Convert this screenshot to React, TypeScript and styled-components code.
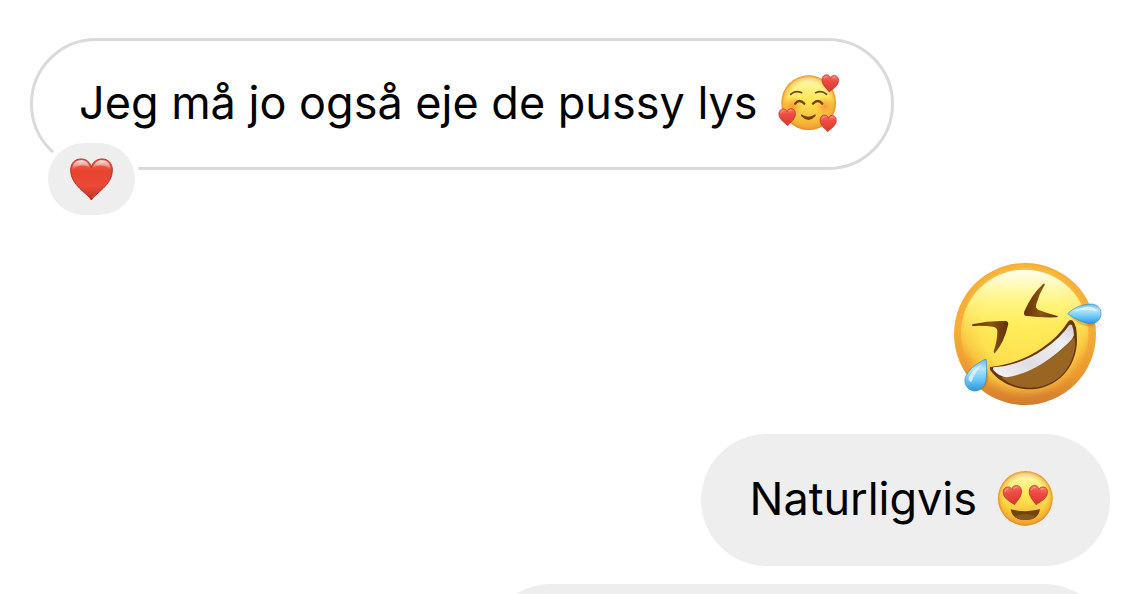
import React from "react";
import styled, { createGlobalStyle, css } from "styled-components";

const GlobalStyle = createGlobalStyle`
  * { box-sizing: border-box; }
  body { margin: 0; background: #ffffff; }
`;

const Thread = styled.main`
  height: 100vh;
  overflow: hidden;
  display: flex;
  flex-direction: column;
  padding: 38px 36px 0 30px;
  color: #000000;
  font-family: Inter, "Liberation Sans", sans-serif;
  font-size: 45px;
  line-height: 60px;
`;

const Message = styled.article<{ $own?: boolean; $after?: number }>`
  position: relative;
  flex: none;
  display: flex;
  justify-content: ${(p) => (p.$own ? "flex-end" : "flex-start")};
  margin-bottom: ${(p) => p.$after ?? 0}px;
`;

const Bubble = styled.div<{ $own?: boolean; $minWidth?: number }>`
  display: flex;
  align-items: center;
  gap: 20px;
  min-height: 132px;
  min-width: ${(p) => p.$minWidth ?? 0}px;
  border-radius: 66px;
  ${(p) =>
    p.$own
      ? css`
          padding: 0 57px 3px 49px;
          background: #eeeeee;
        `
      : css`
          padding: 0 51px 3px 46px;
          border: 3px solid #dadada;
          background: #ffffff;
        `}
`;

const Text = styled.p`
  margin: 0;
`;

const Reaction = styled.button`
  position: absolute;
  left: 18px;
  top: 105px;
  display: flex;
  align-items: center;
  justify-content: center;
  width: 87px;
  height: 72px;
  padding: 0;
  border: 0;
  border-radius: 36px;
  background: #eeeeee;
  box-shadow: 0 0 0 5px #ffffff;
`;

const Sticker = styled.div`
  display: flex;
  padding-right: 6px;
`;

const Emoji = styled.svg`
  flex: none;
  display: block;
`;

const FaceFill = ({ id }: { id: string }) => (
  <>
    <linearGradient id={`${id}-base`} x1="0" y1="0" x2="0" y2="1">
      <stop offset="0" stopColor="#fffbd5" />
      <stop offset="0.18" stopColor="#fff491" />
      <stop offset="0.48" stopColor="#ffe650" />
      <stop offset="0.78" stopColor="#f9c13c" />
      <stop offset="1" stopColor="#eda235" />
    </linearGradient>
    <radialGradient id={`${id}-rim`} cx="0.5" cy="0.5" r="0.5">
      <stop offset="0.74" stopColor="#f5a52c" stopOpacity="0" />
      <stop offset="0.9" stopColor="#f3a22c" stopOpacity="0.45" />
      <stop offset="1" stopColor="#df8924" stopOpacity="0.95" />
    </radialGradient>
    <linearGradient id={`${id}-heart`} x1="0" y1="0" x2="0" y2="1">
      <stop offset="0" stopColor="#f47a6c" />
      <stop offset="0.35" stopColor="#ee4b41" />
      <stop offset="1" stopColor="#d9372f" />
    </linearGradient>
  </>
);

const heartPath =
  "M0 26 C-6 18-26 7-26-11 C-26-22-18-27-12-27 C-5-27-1-22 0-17 C1-22 5-27 12-27 C19-27 26-22 26-11 C26 7 6 18 0 26Z";

const SmallHeart = ({ x, y, r = 0, s = 1, fill }: { x: number; y: number; r?: number; s?: number; fill: string }) => (
  <g transform={`translate(${x} ${y}) rotate(${r}) scale(${s})`}>
    <path d={heartPath} fill={fill} stroke="#bd302a" strokeWidth="2" />
    <path d="M-20-14Q-18-22-11-22M6-19Q9-23 14-22" fill="none" stroke="#ffb0a2" strokeWidth="3" strokeLinecap="round" opacity="0.65" />
  </g>
);

const LovedFace = () => (
  <Emoji width="62" height="60" viewBox="52 38 186 180" role="img" aria-label="Smilende ansigt med hjerter">
    <defs>
      <FaceFill id="loved" />
      <radialGradient id="loved-blush">
        <stop offset="0" stopColor="#f57a2b" stopOpacity="0.65" />
        <stop offset="1" stopColor="#f57a2b" stopOpacity="0" />
      </radialGradient>
    </defs>
    <circle cx="144" cy="127" r="82" fill="url(#loved-base)" />
    <circle cx="144" cy="127" r="82" fill="url(#loved-rim)" />
    <circle cx="94" cy="138" r="31" fill="url(#loved-blush)" />
    <circle cx="194" cy="138" r="31" fill="url(#loved-blush)" />
    <g fill="none" stroke="#71440f" strokeLinecap="round">
      <path d="M90 102Q104 89 123 97" strokeWidth="5" />
      <path d="M165 97Q184 89 198 102" strokeWidth="5" />
      <path d="M103 130Q116 114 131 130" strokeWidth="7" />
      <path d="M157 130Q172 114 185 130" strokeWidth="7" />
    </g>
    <path d="M122 162Q143 176 164 162Q167 164 164 168Q144 190 122 168Q119 164 122 162Z" fill="#71440f" />
    <SmallHeart x={208} y={70} r={5} s={0.96} fill="url(#loved-heart)" />
    <SmallHeart x={80} y={171} r={-3} s={0.96} fill="url(#loved-heart)" />
    <SmallHeart x={202} y={190} r={3} s={0.94} fill="url(#loved-heart)" />
  </Emoji>
);

const HeartEyes = () => (
  <Emoji width="56" height="57" viewBox="51 45 168 171" role="img" aria-label="Smilende ansigt med hjerteøjne">
    <defs>
      <FaceFill id="eyes" />
      <clipPath id="eyes-mouth">
        <path d="M92 163Q136 174 180 163Q175 195 136 195Q97 195 92 163Z" />
      </clipPath>
    </defs>
    <circle cx="136" cy="130" r="82" fill="url(#eyes-base)" />
    <circle cx="136" cy="130" r="82" fill="url(#eyes-rim)" />
    <SmallHeart x={99} y={122} r={-10} s={1.06} fill="url(#eyes-heart)" />
    <SmallHeart x={173} y={122} r={10} s={1.06} fill="url(#eyes-heart)" />
    <path d="M92 163Q136 174 180 163Q175 195 136 195Q97 195 92 163Z" fill="#70450d" />
    <ellipse cx="136" cy="193" rx="34" ry="16" fill="#86591b" clipPath="url(#eyes-mouth)" />
  </Emoji>
);

const RedHeart = () => (
  <Emoji width="43" height="43" viewBox="150 142 129 129" aria-hidden="true">
    <defs>
      <linearGradient id="red-fill" x1="0" y1="0" x2="0" y2="1">
        <stop offset="0" stopColor="#ef6758" />
        <stop offset="0.3" stopColor="#e7432f" />
        <stop offset="0.65" stopColor="#eb4a37" />
        <stop offset="1" stopColor="#c52f20" />
      </linearGradient>
      <linearGradient id="red-shine" x1="0" y1="0" x2="0" y2="1">
        <stop offset="0" stopColor="#ffffff" stopOpacity="0.85" />
        <stop offset="1" stopColor="#ffffff" stopOpacity="0" />
      </linearGradient>
    </defs>
    <path
      d="M214 268C204 249 152 224 152 179C152 157 165 145 183 145C199 145 210 154 214 170C218 154 230 145 246 145C264 145 277 157 277 179C277 224 224 249 214 268Z"
      fill="url(#red-fill)"
      stroke="#b52c1e"
      strokeWidth="3"
    />
    <path d="M157 177C158 157 169 149 183 149C197 149 206 157 209 171C193 161 174 162 157 177Z" fill="url(#red-shine)" />
    <path d="M219 171C223 157 232 149 246 149C260 149 271 157 272 177C255 162 236 161 219 171Z" fill="url(#red-shine)" />
  </Emoji>
);

const Rofl = () => (
  <Emoji width="152" height="144" viewBox="36 36 456 432" role="img" aria-label="Griner på gulvet">
    <defs>
      <linearGradient id="rofl-base" x1="0" y1="0" x2="0" y2="1">
        <stop offset="0" stopColor="#f9ab34" />
        <stop offset="0.45" stopColor="#f6ae35" />
        <stop offset="0.8" stopColor="#e9962f" />
        <stop offset="1" stopColor="#d07c30" />
      </linearGradient>
      <radialGradient id="rofl-glow" cx="0.5" cy="0.46" r="0.5">
        <stop offset="0" stopColor="#ffe856" />
        <stop offset="0.62" stopColor="#fedf4d" />
        <stop offset="0.84" stopColor="#f9c540" stopOpacity="0.85" />
        <stop offset="1" stopColor="#f3a633" stopOpacity="0" />
      </radialGradient>
      <linearGradient id="rofl-shine" x1="0" y1="0" x2="0" y2="1">
        <stop offset="0" stopColor="#fffef1" />
        <stop offset="0.14" stopColor="#fffbb4" stopOpacity="0.95" />
        <stop offset="0.3" stopColor="#fff77f" stopOpacity="0.8" />
        <stop offset="0.5" stopColor="#fff05e" stopOpacity="0.4" />
        <stop offset="0.72" stopColor="#ffe34f" stopOpacity="0" />
      </linearGradient>
      <linearGradient id="rofl-eye" x1="0" y1="0" x2="1" y2="0">
        <stop offset="0" stopColor="#633000" />
        <stop offset="0.5" stopColor="#8a5514" />
        <stop offset="1" stopColor="#633000" />
      </linearGradient>
      <linearGradient id="rofl-teeth" x1="0" y1="1" x2="1" y2="0">
        <stop offset="0" stopColor="#f5f5f7" />
        <stop offset="0.35" stopColor="#dedee3" />
        <stop offset="0.75" stopColor="#f0f0f3" />
        <stop offset="1" stopColor="#cfcfd5" />
      </linearGradient>
      <linearGradient id="rofl-tear" x1="0" y1="0" x2="0" y2="1">
        <stop offset="0" stopColor="#62b8e8" />
        <stop offset="0.3" stopColor="#b5e6fb" />
        <stop offset="0.65" stopColor="#69c7f6" />
        <stop offset="1" stopColor="#2f96d5" />
      </linearGradient>
    </defs>
    <circle cx="255" cy="252" r="213" fill="url(#rofl-base)" />
    <circle cx="255" cy="252" r="210" fill="url(#rofl-glow)" />
    <circle cx="254" cy="250" r="191" fill="url(#rofl-shine)" />
    <path
      d="M97 223Q148 211 198 213Q207 215 204 226Q193 276 165 309Q161 311 161 304Q173 268 172 242Q171 232 158 230Q125 225 99 228Q94 226 97 223Z"
      fill="url(#rofl-eye)"
    />
    <path
      d="M310 101Q274 134 253 184Q250 193 255 197Q303 204 350 202Q357 200 350 197Q317 188 294 179Q285 173 289 162Q297 132 314 104Q315 99 310 101Z"
      fill="url(#rofl-eye)"
    />
    <path
      d="M151 351Q236 342 305 295Q358 258 384 215Q390 207 398 212Q411 224 411 269C411 353 350 418 267 418C221 418 175 395 151 361Q148 354 151 351Z"
      fill="#6b3704"
    />
    <path d="M183 382Q311 366 403 262Q407 278 405 293C393 366 340 413 267 413Q216 412 183 382Z" fill="#996523" />
    <path
      d="M161 352Q244 345 312 298Q363 263 387 226Q392 221 396 226Q402 241 402 256Q398 269 385 279Q294 367 201 382Q180 382 160 360Q157 354 161 352Z"
      fill="url(#rofl-teeth)"
    />
    <ellipse cx="462" cy="225" rx="24" ry="10" fill="#704020" opacity="0.08" />
    <path d="M389 198Q423 232 451 228Q470 225 466 208Z" fill="#a96016" opacity="0.3" />
    <path d="M139 350Q155 393 128 418L112 412Z" fill="#a96016" opacity="0.35" />
    <path
      d="M383 191Q410 164 452 162C470 162 483 173 483 190C483 208 470 221 452 221Q421 219 383 191Z"
      fill="url(#rofl-tear)"
      stroke="#348fc8"
      strokeWidth="2"
    />
    <path d="M400 186Q432 166 454 170Q470 174 471 185Q438 173 400 186Z" fill="#e4f8ff" opacity="0.8" />
    <path
      d="M135 328Q88 351 76 382C70 402 83 421 103 423C121 423 134 411 138 392Q141 365 139 331Q139 326 135 328Z"
      fill="url(#rofl-tear)"
      stroke="#348fc8"
      strokeWidth="2"
    />
    <path d="M128 341Q92 363 86 383Q86 394 94 397Q105 364 128 341Z" fill="#e4f8ff" opacity="0.8" />
  </Emoji>
);

export default function App() {
  return (
    <>
      <GlobalStyle />
      <Thread aria-label="Samtale">
        <Message $after={92}>
          <Bubble>
            <Text>Jeg må jo også eje de pussy lys</Text>
            <LovedFace />
          </Bubble>
          <Reaction type="button" aria-label="Hjertereaktion">
            <RedHeart />
          </Reaction>
        </Message>
        <Message $own $after={28}>
          <Sticker>
            <Rofl />
          </Sticker>
        </Message>
        <Message $own $after={18}>
          <Bubble $own>
            <Text>Naturligvis</Text>
            <HeartEyes />
          </Bubble>
        </Message>
        <Message $own>
          <Bubble $own $minWidth={625} />
        </Message>
      </Thread>
    </>
  );
}
